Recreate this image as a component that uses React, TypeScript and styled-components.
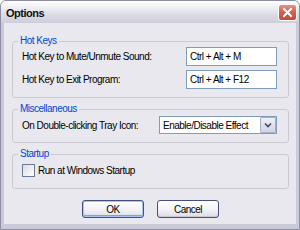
import styled, { createGlobalStyle } from "styled-components";

const GlobalStyle = createGlobalStyle`
  body {
    margin: 0;
    font-family: "Liberation Sans", Arial, sans-serif;
    font-size: 10px;
    letter-spacing: -0.5px;
    color: #000;
  }
`

const Window = styled.div`
  width: 300px;
  height: 230px;
  box-sizing: border-box;
  border: 1px solid #8c8ca4;
  border-radius: 6px 6px 0 0;
  background: #c9c9d8;
  display: flex;
  flex-direction: column;
  overflow: hidden;
`
const TitleBar = styled.div`
  height: 22px;
  flex: none;
  display: flex;
  align-items: center;
  padding: 1px 2px 0 5px;
  box-sizing: border-box;
  background: linear-gradient(to bottom, #ffffff 0%, #f2f2f6 25%, #dcdce6 60%, #cfcfdc 100%);
`
const Title = styled.div`
  font-size: 11px;
  font-weight: bold;
  color: #111;
`
const CloseButton = styled.div`
  margin-left: auto;
  width: 19px;
  height: 17px;
  box-sizing: border-box;
  border: 1px solid #fff;
  border-radius: 3px;
  background: linear-gradient(to bottom, #e8907e 0%, #d2604c 50%, #c24a36 100%);
  display: flex;
  align-items: center;
  justify-content: center;
`
const Body = styled.div`
  flex: 1;
  margin: 0 3px 5px;
  background: #e8e8ee;
  padding: 12px 7px 0 8px;
  display: flex;
  flex-direction: column;
  gap: 5px;
`
const Group = styled.fieldset<{ $bottom: number }>`
  margin: 0;
  border: 1px solid #cacad2;
  border-radius: 3px;
  padding: 0 11px ${p => p.$bottom}px 9px;
  min-width: 0;
`
const Legend = styled.legend`
  color: #0046d5;
  line-height: 12px;
  padding: 0 2px;
  margin-left: -4px;
`
const FieldGrid = styled.div<{ $field: number; $top: number }>`
  display: grid;
  grid-template-columns: 1fr ${p => p.$field}px;
  row-gap: 4px;
  align-items: center;
  padding-top: ${p => p.$top}px;
`
const Label = styled.div`
  white-space: nowrap;
`
const TextBox = styled.div`
  height: 19px;
  box-sizing: border-box;
  border: 1px solid #7f9db9;
  background: #fff;
  padding: 0 3px;
  display: flex;
  align-items: center;
`
const Select = styled.div`
  height: 18px;
  box-sizing: border-box;
  border: 1px solid #7f9db9;
  background: #fff;
  padding: 0 0 0 3px;
  display: flex;
  align-items: center;
  justify-content: space-between;
`
const DropButton = styled.div`
  width: 16px;
  height: 16px;
  box-sizing: border-box;
  border: 1px solid #a4aec8;
  border-radius: 1px;
  background: linear-gradient(to bottom, #eef0f8, #d0d4e4);
  display: flex;
  align-items: center;
  justify-content: center;
`
const CheckRow = styled.label`
  display: flex;
  align-items: center;
  gap: 3px;
  height: 16px;
  margin-top: 2px;
`
const CheckBox = styled.span`
  width: 13px;
  height: 13px;
  box-sizing: border-box;
  border: 1px solid #6a7c94;
  background: linear-gradient(135deg, #dcdce2, #ffffff);
`
const ButtonRow = styled.div`
  display: flex;
  justify-content: center;
  gap: 13px;
  margin-top: 6px;
`
const Button = styled.button<{ $default?: boolean }>`
  width: 62px;
  height: 18px;
  box-sizing: border-box;
  font: inherit;
  letter-spacing: inherit;
  color: #000;
  border: 1px solid #44507a;
  border-radius: 3px;
  background: linear-gradient(to bottom, #ffffff 0%, #f4f4f8 50%, #dcdce6 100%);
  box-shadow: ${p => p.$default
    ? "inset 0 0 0 1px #a9c4ee, inset 0 -1px 0 1px #7ea2de"
    : "inset 0 -1px 0 #c8c8d4"};
  padding: 0;
`

const App = () => {
    return <>
        <GlobalStyle />
        <Window>
            <TitleBar>
                <Title>Options</Title>
                <CloseButton>
                    <svg width="11" height="11" viewBox="0 0 11 11">
                        <path d="M2 2 L9 9 M9 2 L2 9" stroke="#fff" strokeWidth="2" strokeLinecap="square" />
                    </svg>
                </CloseButton>
            </TitleBar>
            <Body>
                <Group $bottom={8}>
                    <Legend>Hot Keys</Legend>
                    <FieldGrid $field={91} $top={0}>
                        <Label>Hot Key to Mute/Unmute Sound:</Label>
                        <TextBox>Ctrl + Alt + M</TextBox>
                        <Label>Hot Key to Exit Program:</Label>
                        <TextBox>Ctrl + Alt + F12</TextBox>
                    </FieldGrid>
                </Group>
                <Group $bottom={8}>
                    <Legend>Miscellaneous</Legend>
                    <FieldGrid $field={118} $top={1}>
                        <Label>On Double-clicking Tray Icon:</Label>
                        <Select>
                            Enable/Disable Effect
                            <DropButton>
                                <svg width="8" height="6" viewBox="0 0 8 6">
                                    <path d="M1 1.5 L4 4.5 L7 1.5" fill="none" stroke="#3e4a6a" strokeWidth="1.6" />
                                </svg>
                            </DropButton>
                        </Select>
                    </FieldGrid>
                </Group>
                <Group $bottom={10}>
                    <Legend>Startup</Legend>
                    <CheckRow>
                        <CheckBox />
                        Run at Windows Startup
                    </CheckRow>
                </Group>
                <ButtonRow>
                    <Button $default>OK</Button>
                    <Button>Cancel</Button>
                </ButtonRow>
            </Body>
        </Window>
    </>
}

export default App;
